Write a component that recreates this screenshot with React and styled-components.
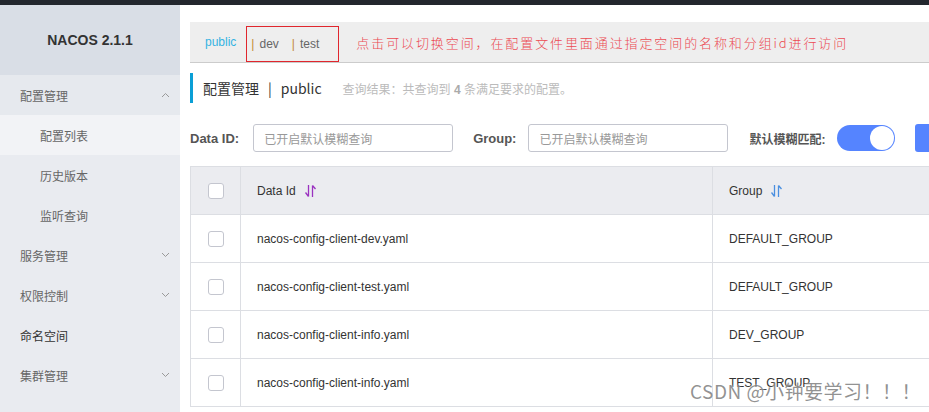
import styled, { createGlobalStyle } from "styled-components";

const GlobalStyle = createGlobalStyle`
  html, body {
    margin: 0;
    padding: 0;
    background: #fff;
    overflow: hidden;
  }
  body {
    font-family: "Liberation Sans", "Noto Sans CJK SC", sans-serif;
    color: #333;
  }
`;

const Page = styled.div`
  position: relative;
  width: 929px;
  height: 412px;
  overflow: hidden;
`;

const TopStrip = styled.div`
  height: 5px;
  background: #23272e;
`;

const Layout = styled.div`
  display: flex;
  height: 407px;
`;

const Sidebar = styled.div`
  width: 180px;
  flex-shrink: 0;
  background: #e9ebf0;
`;

const Brand = styled.div`
  height: 70px;
  background: #d9dee6;
  display: flex;
  align-items: center;
  justify-content: center;
  font-size: 14px;
  font-weight: bold;
  color: #333;
`;

const MenuItem = styled.div`
  height: 40px;
  display: flex;
  align-items: center;
  justify-content: space-between;
  padding: 0 10px 0 ${(p) => (p.$sub ? 40 : 20)}px;
  font-size: 12px;
  color: ${(p) => (p.$dark ? "#333" : "#666")};
  background: ${(p) => (p.$active ? "#f2f3f6" : p.$open ? "#e6e9ee" : "transparent")};
`;

const Main = styled.div`
  flex: 1;
  min-width: 0;
  padding: 17px 0 0 10px;
`;

const NsBar = styled.div`
  width: 900px;
  height: 40px;
  background: #eeeeee;
  border-bottom: 1px solid #cccccc;
  display: flex;
  align-items: center;
  padding-left: 15px;
  font-size: 12px;
  white-space: nowrap;
`;

const NsLink = styled.span`
  color: ${(p) => (p.$current ? "#35b3e2" : "#666")};
`;

const NsBox = styled.div`
  align-self: flex-end;
  height: 36px;
  width: 93px;
  flex-shrink: 0;
  box-sizing: border-box;
  border: 1px solid #e0262d;
  margin-left: 10px;
  display: flex;
  align-items: center;
  gap: 13px;
  padding-left: 4px;
`;

const Pipe = styled.span`
  color: #c28a36;
  margin-right: 5px;
`;

const Note = styled.span`
  margin-left: 17px;
  color: #ec4a52;
  font-family: "Noto Sans CJK SC", sans-serif;
  font-size: 13px;
  letter-spacing: 1.9px;
  font-weight: 300;
`;

const TitleRow = styled.div`
  margin-top: 10px;
  height: 30px;
  border-left: 3px solid #0a9fd6;
  padding-left: 10px;
  display: flex;
  align-items: center;
  white-space: nowrap;
`;

const Title = styled.span`
  font-size: 14px;
  color: #333;
  font-family: "Noto Sans CJK SC", "Liberation Sans", sans-serif;
`;

const TitleSep = styled.span`
  margin: 0 9px;
`;

const Summary = styled.span`
  margin-left: 21px;
  font-size: 12px;
  color: #bbbbbb;
  b {
    color: #aaa;
  }
`;

const SearchRow = styled.div`
  margin-top: 21px;
  display: flex;
  align-items: center;
  height: 28px;
  white-space: nowrap;
`;

const Label = styled.span`
  flex-shrink: 0;
  font-size: ${(p) => p.$size || 13}px;
  font-weight: bold;
  color: #555;
  margin-right: ${(p) => p.$after || 12}px;
  margin-left: ${(p) => p.$gap || 0}px;
`;

const Input = styled.div`
  flex-shrink: 0;
  width: 200px;
  height: 28px;
  box-sizing: border-box;
  border: 1px solid #c4c6cf;
  border-radius: 3px;
  padding-left: 10px;
  display: flex;
  align-items: center;
  font-size: 12px;
  color: #999;
`;

const Switch = styled.div`
  flex-shrink: 0;
  width: 58px;
  height: 26px;
  border-radius: 13px;
  background: #5584ff;
  display: flex;
  align-items: center;
  justify-content: flex-end;
  padding-right: 1px;
  box-sizing: border-box;
`;

const Knob = styled.div`
  width: 24px;
  height: 24px;
  border-radius: 50%;
  background: #fff;
`;

const Button = styled.div`
  margin-left: 20px;
  width: 60px;
  height: 28px;
  border-radius: 3px;
  background: #5584ff;
  flex-shrink: 0;
`;

const Table = styled.div`
  margin-top: 14px;
  width: 900px;
  border-left: 1px solid #dcdee3;
`;

const Row = styled.div`
  display: grid;
  grid-template-columns: 49px 472px 1fr;
  height: 47px;
  border-top: ${(p) => (p.$head ? "1px solid #dcdee3" : "none")};
  border-bottom: 1px solid #dcdee3;
  background: ${(p) => (p.$head ? "#ebecf0" : "#fff")};
`;

const Cell = styled.div`
  display: flex;
  align-items: center;
  justify-content: ${(p) => (p.$center ? "center" : "flex-start")};
  padding-left: ${(p) => (p.$center ? 0 : 16)}px;
  border-left: ${(p) => (p.$first ? "none" : "1px solid #dcdee3")};
  font-size: 12px;
  color: #333;
  white-space: nowrap;
`;

const Check = styled.div`
  width: 16px;
  height: 16px;
  box-sizing: border-box;
  border: 1px solid #c4c6cf;
  border-radius: 3px;
  background: #fff;
`;

const SortIcon = styled.svg`
  margin-left: 9px;
`;

const Watermark = styled.div`
  position: absolute;
  left: 690px;
  bottom: 8px;
  font-family: "Noto Sans CJK SC", sans-serif;
  font-size: 19px;
  color: rgba(110, 110, 110, 0.75);
  letter-spacing: 0.5px;
  text-shadow: 0 0 2px #fff;
  white-space: nowrap;
`;

function Chevron({ up }) {
  return (
    <svg width="9" height="6" viewBox="0 0 9 6">
      <path
        d={up ? "M1 5 L4.5 1.5 L8 5" : "M1 1 L4.5 4.5 L8 1"}
        fill="none"
        stroke="#999"
        strokeWidth="1"
      />
    </svg>
  );
}

function Sort({ color }) {
  return (
    <SortIcon width="11" height="12" viewBox="0 0 11 12">
      <path
        d="M3.5 0 V11.5 M3.5 11.5 L0.5 7.5 M7.5 12 V0.5 M7.5 0.5 L10.5 4"
        fill="none"
        stroke={color}
        strokeWidth="1.3"
      />
    </SortIcon>
  );
}

const rows = [
  ["nacos-config-client-dev.yaml", "DEFAULT_GROUP"],
  ["nacos-config-client-test.yaml", "DEFAULT_GROUP"],
  ["nacos-config-client-info.yaml", "DEV_GROUP"],
  ["nacos-config-client-info.yaml", "TEST_GROUP"],
];

export default function App() {
  return (
    <Page>
      <GlobalStyle />
      <TopStrip />
      <Layout>
        <Sidebar>
          <Brand>NACOS 2.1.1</Brand>
          <MenuItem $open>
            配置管理 <Chevron up />
          </MenuItem>
          <MenuItem $sub $active>配置列表</MenuItem>
          <MenuItem $sub>历史版本</MenuItem>
          <MenuItem $sub>监听查询</MenuItem>
          <MenuItem>
            服务管理 <Chevron />
          </MenuItem>
          <MenuItem>
            权限控制 <Chevron />
          </MenuItem>
          <MenuItem $dark>命名空间</MenuItem>
          <MenuItem>
            集群管理 <Chevron />
          </MenuItem>
        </Sidebar>
        <Main>
          <NsBar>
            <NsLink $current>public</NsLink>
            <NsBox>
              <NsLink>
                <Pipe>|</Pipe>dev
              </NsLink>
              <NsLink>
                <Pipe>|</Pipe>test
              </NsLink>
            </NsBox>
            <Note>点击可以切换空间，在配置文件里面通过指定空间的名称和分组id进行访问</Note>
          </NsBar>
          <TitleRow>
            <Title>
              配置管理<TitleSep>|</TitleSep>public
            </Title>
            <Summary>
              查询结果：共查询到 <b>4</b> 条满足要求的配置。
            </Summary>
          </TitleRow>
          <SearchRow>
            <Label $after={14}>Data ID:</Label>
            <Input>已开启默认模糊查询</Input>
            <Label $gap={20}>Group:</Label>
            <Input>已开启默认模糊查询</Input>
            <Label $gap={21} $size={12}>默认模糊匹配:</Label>
            <Switch>
              <Knob />
            </Switch>
            <Button />
          </SearchRow>
          <Table>
            <Row $head>
              <Cell $first $center>
                <Check />
              </Cell>
              <Cell>
                Data Id
                <Sort color="#9a32c0" />
              </Cell>
              <Cell>
                Group
                <Sort color="#4a8fe0" />
              </Cell>
            </Row>
            {rows.map(([id, group], i) => (
              <Row key={i}>
                <Cell $first $center>
                  <Check />
                </Cell>
                <Cell>{id}</Cell>
                <Cell>{group}</Cell>
              </Row>
            ))}
          </Table>
        </Main>
      </Layout>
      <Watermark>CSDN @小钟要学习！！！</Watermark>
    </Page>
  );
}
